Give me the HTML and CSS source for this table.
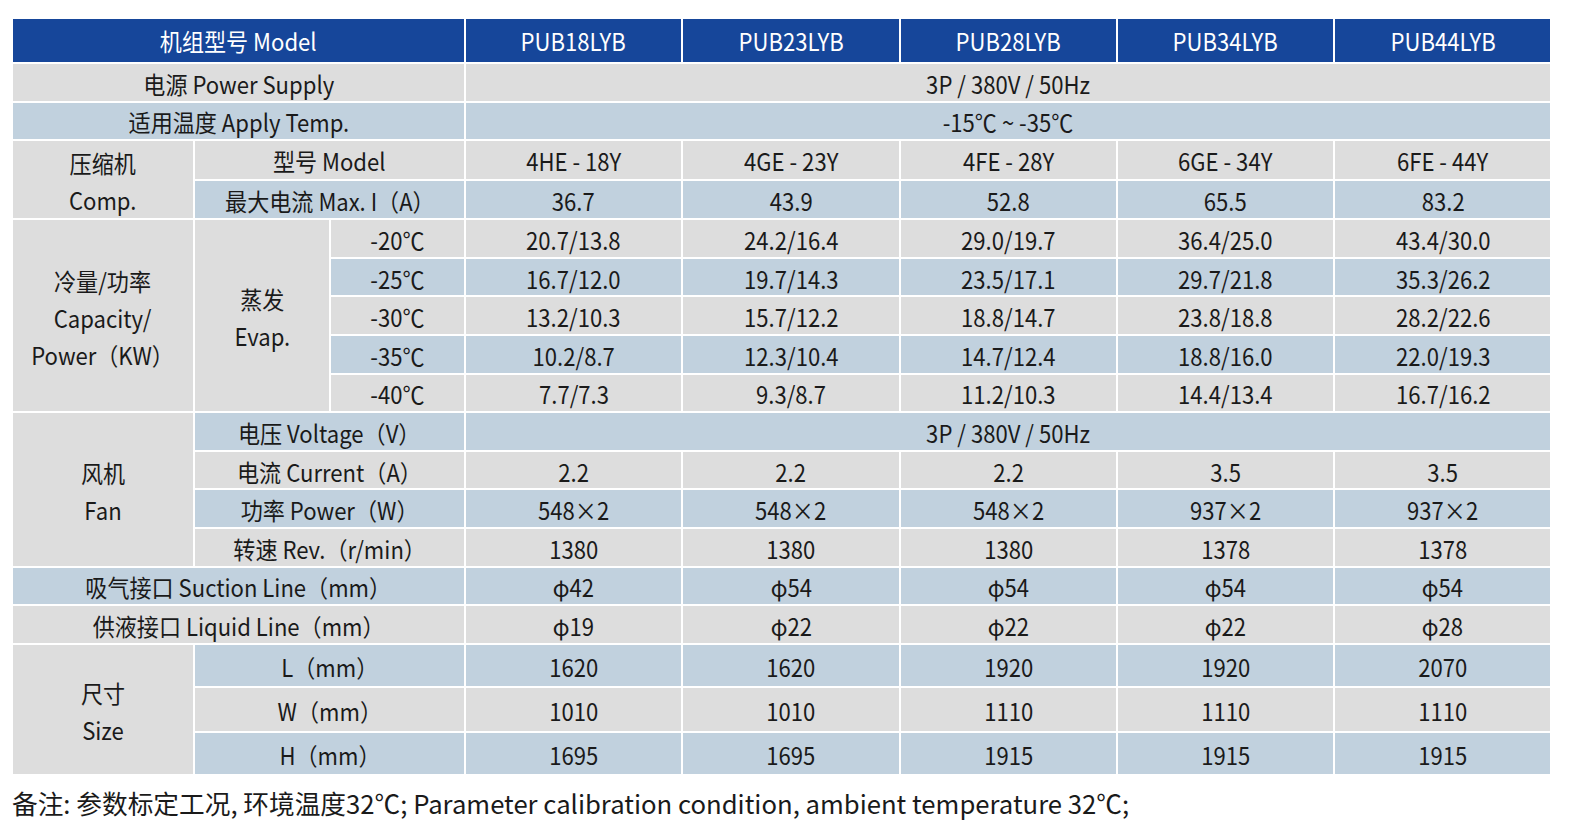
FILE: index.html
```html
<!DOCTYPE html>
<html lang="zh-CN">
<head>
<meta charset="utf-8">
<title>参数表</title>
<link rel="stylesheet" href="styles.css">
</head>
<body>
<div class="page">
<table class="spec">
  <colgroup>
    <col class="c1"><col class="c2"><col class="c3">
    <col class="cd"><col class="cd"><col class="cd"><col class="cd"><col class="cd">
  </colgroup>
  <thead>
    <tr class="head">
      <th colspan="3"><span class="t">机组型号 Model</span></th>
      <th><span class="t">PUB18LYB</span></th><th><span class="t">PUB23LYB</span></th><th><span class="t">PUB28LYB</span></th><th><span class="t">PUB34LYB</span></th><th><span class="t">PUB44LYB</span></th>
    </tr>
  </thead>
  <tbody>
    <tr class="g">
      <td colspan="3"><span class="t">电源 Power Supply</span></td>
      <td colspan="5"><span class="t">3P / 380V / 50Hz</span></td>
    </tr>
    <tr class="b">
      <td colspan="3"><span class="t">适用温度 Apply Temp.</span></td>
      <td colspan="5"><span class="t">-15℃ ~ -35℃</span></td>
    </tr>
    <tr class="g">
      <td rowspan="2" class="grp multi"><span class="t">压缩机<br>Comp.</span></td>
      <td colspan="2"><span class="t">型号 Model</span></td>
      <td><span class="t">4HE - 18Y</span></td><td><span class="t">4GE - 23Y</span></td><td><span class="t">4FE - 28Y</span></td><td><span class="t">6GE - 34Y</span></td><td><span class="t">6FE - 44Y</span></td>
    </tr>
    <tr class="b">
      <td colspan="2"><span class="t">最大电流 Max. I（A）</span></td>
      <td><span class="t">36.7</span></td><td><span class="t">43.9</span></td><td><span class="t">52.8</span></td><td><span class="t">65.5</span></td><td><span class="t">83.2</span></td>
    </tr>
    <tr class="g">
      <td rowspan="5" class="grp multi"><span class="t">冷量/功率<br>Capacity/<br>Power（KW）</span></td>
      <td rowspan="5" class="grp multi"><span class="t">蒸发<br>Evap.</span></td>
      <td><span class="t">-20℃</span></td>
      <td><span class="t">20.7/13.8</span></td><td><span class="t">24.2/16.4</span></td><td><span class="t">29.0/19.7</span></td><td><span class="t">36.4/25.0</span></td><td><span class="t">43.4/30.0</span></td>
    </tr>
    <tr class="b">
      <td><span class="t">-25℃</span></td>
      <td><span class="t">16.7/12.0</span></td><td><span class="t">19.7/14.3</span></td><td><span class="t">23.5/17.1</span></td><td><span class="t">29.7/21.8</span></td><td><span class="t">35.3/26.2</span></td>
    </tr>
    <tr class="g">
      <td><span class="t">-30℃</span></td>
      <td><span class="t">13.2/10.3</span></td><td><span class="t">15.7/12.2</span></td><td><span class="t">18.8/14.7</span></td><td><span class="t">23.8/18.8</span></td><td><span class="t">28.2/22.6</span></td>
    </tr>
    <tr class="b">
      <td><span class="t">-35℃</span></td>
      <td><span class="t">10.2/8.7</span></td><td><span class="t">12.3/10.4</span></td><td><span class="t">14.7/12.4</span></td><td><span class="t">18.8/16.0</span></td><td><span class="t">22.0/19.3</span></td>
    </tr>
    <tr class="g">
      <td><span class="t">-40℃</span></td>
      <td><span class="t">7.7/7.3</span></td><td><span class="t">9.3/8.7</span></td><td><span class="t">11.2/10.3</span></td><td><span class="t">14.4/13.4</span></td><td><span class="t">16.7/16.2</span></td>
    </tr>
    <tr class="b">
      <td rowspan="4" class="grp multi"><span class="t">风机<br>Fan</span></td>
      <td colspan="2"><span class="t">电压 Voltage（V）</span></td>
      <td colspan="5"><span class="t">3P / 380V / 50Hz</span></td>
    </tr>
    <tr class="g">
      <td colspan="2"><span class="t">电流 Current（A）</span></td>
      <td><span class="t">2.2</span></td><td><span class="t">2.2</span></td><td><span class="t">2.2</span></td><td><span class="t">3.5</span></td><td><span class="t">3.5</span></td>
    </tr>
    <tr class="b">
      <td colspan="2"><span class="t">功率 Power（W）</span></td>
      <td><span class="t">548×2</span></td><td><span class="t">548×2</span></td><td><span class="t">548×2</span></td><td><span class="t">937×2</span></td><td><span class="t">937×2</span></td>
    </tr>
    <tr class="g">
      <td colspan="2"><span class="t">转速 Rev.（r/min）</span></td>
      <td><span class="t">1380</span></td><td><span class="t">1380</span></td><td><span class="t">1380</span></td><td><span class="t">1378</span></td><td><span class="t">1378</span></td>
    </tr>
    <tr class="b">
      <td colspan="3"><span class="t">吸气接口 Suction Line（mm）</span></td>
      <td><span class="t">φ42</span></td><td><span class="t">φ54</span></td><td><span class="t">φ54</span></td><td><span class="t">φ54</span></td><td><span class="t">φ54</span></td>
    </tr>
    <tr class="g">
      <td colspan="3"><span class="t">供液接口 Liquid Line（mm）</span></td>
      <td><span class="t">φ19</span></td><td><span class="t">φ22</span></td><td><span class="t">φ22</span></td><td><span class="t">φ22</span></td><td><span class="t">φ28</span></td>
    </tr>
    <tr class="b dim1">
      <td rowspan="3" class="grp multi"><span class="t">尺寸<br>Size</span></td>
      <td colspan="2"><span class="t">L（mm）</span></td>
      <td><span class="t">1620</span></td><td><span class="t">1620</span></td><td><span class="t">1920</span></td><td><span class="t">1920</span></td><td><span class="t">2070</span></td>
    </tr>
    <tr class="g dim2">
      <td colspan="2"><span class="t">W（mm）</span></td>
      <td><span class="t">1010</span></td><td><span class="t">1010</span></td><td><span class="t">1110</span></td><td><span class="t">1110</span></td><td><span class="t">1110</span></td>
    </tr>
    <tr class="b dim3">
      <td colspan="2"><span class="t">H（mm）</span></td>
      <td><span class="t">1695</span></td><td><span class="t">1695</span></td><td><span class="t">1915</span></td><td><span class="t">1915</span></td><td><span class="t">1915</span></td>
    </tr>
  </tbody>
</table>
<p class="note">备注: 参数标定工况, 环境温度32℃; Parameter calibration condition, ambient temperature 32℃;</p>
</div>
</body>
</html>
```
FILE: styles.css
```css
html, body {
  margin: 0;
  padding: 0;
  background: #ffffff;
}
body {
  font-family: "Noto Sans CJK SC", "Noto Sans", sans-serif;
  color: #1a1a1a;
}
.page {
  padding: 17px 0 0 11px;
}
.spec {
  border-collapse: collapse;
  table-layout: fixed;
  width: 1539.5px;
  font-size: 24px;
}
.c1 { width: 182px; }
.c2 { width: 136px; }
.c3 { width: 135px; }
.cd { width: 217.3px; }
.spec th,
.spec td {
  border: 2px solid #ffffff;
  padding: 0;
  text-align: center;
  vertical-align: middle;
  line-height: 30px;
  font-weight: 400;
  white-space: nowrap;
}
.spec td {
  padding-top: 3px;
}
.t {
  display: inline-block;
  transform: scaleX(0.92);
  transform-origin: 50% 50%;
}
.spec .head { height: 45px; }
.spec .head th {
  background: #16469a;
  color: #ffffff;
}
.spec tbody tr { height: 38.6px; }
.spec tr.g td { background: #dddddd; }
.spec tr.b td { background: #c1d1de; }
.spec tr td.grp { background: #dddddd; }
.spec td.multi { line-height: 37px; }
.spec tr.dim1 { height: 43px; }
.spec tr.dim2 { height: 45px; }
.spec tr.dim3 { height: 43px; }
.note {
  margin: 10px 0 0 1px;
  font-size: 25.7px;
  line-height: 34px;
  color: #1a1a1a;
}
```
